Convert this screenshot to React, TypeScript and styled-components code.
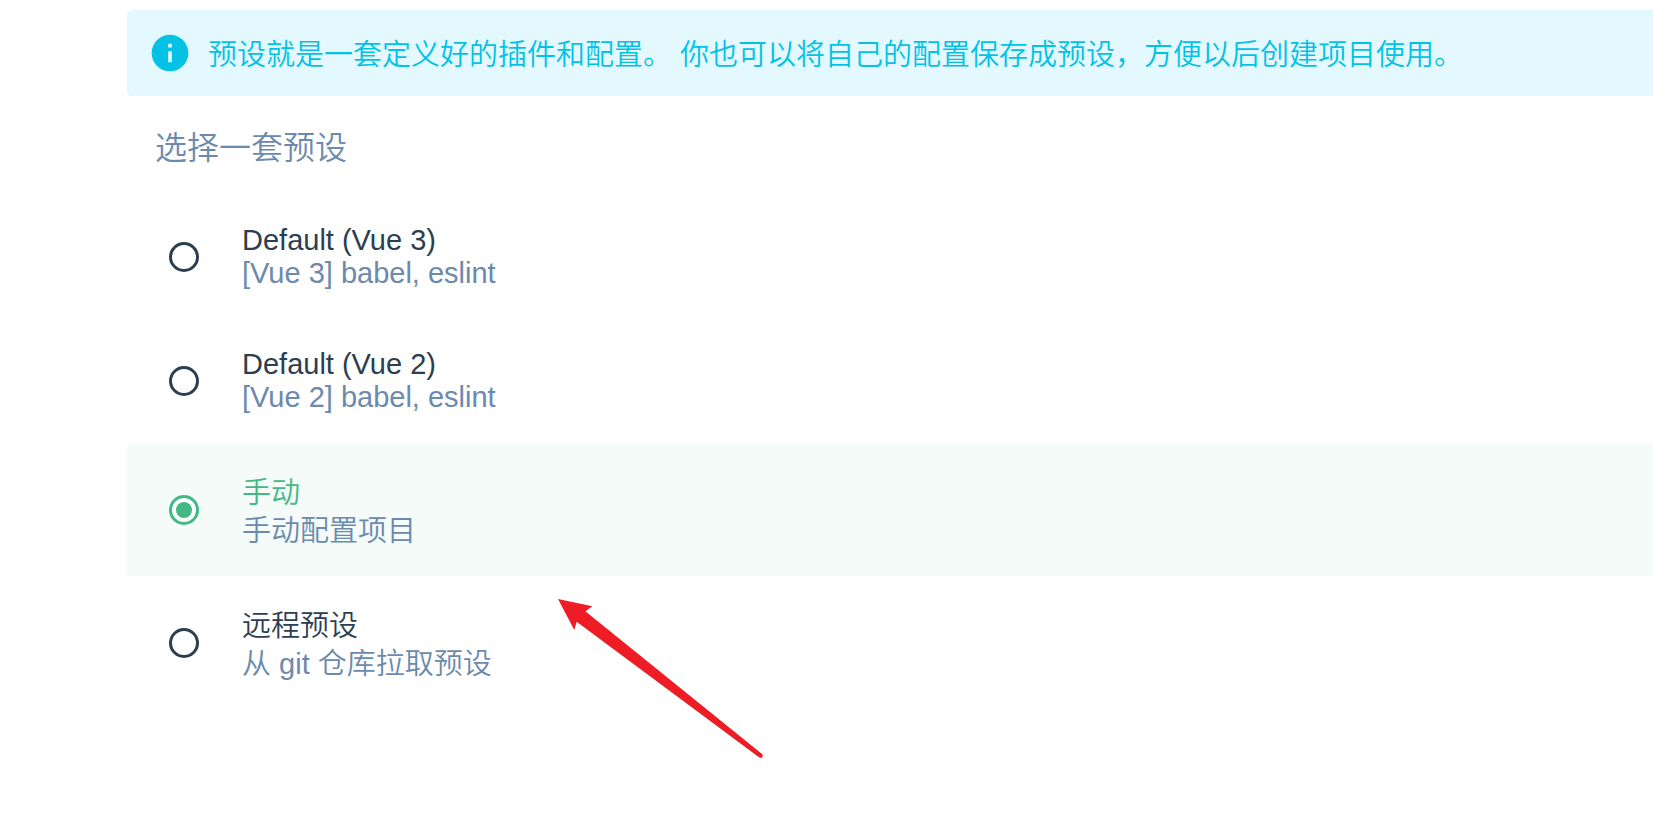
import React, { useState } from "react";
import styled, { createGlobalStyle } from "styled-components";

const color = {
  info: "#03c2e6",
  infoLight: "#e3f9ff",
  dark: "#2c3e50",
  muted: "#6b8aad",
  primary: "#42b983",
  primaryLight: "#f4fbf9",
  arrow: "#ee1c25",
};

const GlobalStyle = createGlobalStyle`
  *, *::before, *::after { box-sizing: border-box; }
  body {
    margin: 0;
    background: #ffffff;
    color: ${color.dark};
    font-family: "Liberation Sans", "Noto Sans CJK SC", sans-serif;
    font-size: 29px;
    font-weight: 350;
  }
`;

const Page = styled.main`
  position: relative;
  padding: 10px 0 80px 127px;
`;

const Banner = styled.p`
  display: flex;
  align-items: center;
  gap: 16px;
  margin: 0;
  padding: 22px 21px;
  border-radius: 5px 0 0 5px;
  background: ${color.infoLight};
  color: ${color.info};
  line-height: 38px;
`;

const BannerText = styled.span`
  padding-top: 4px;
`;

const InfoIcon = styled.svg`
  flex: none;
  width: 44px;
  height: 44px;
  margin: -2px 0;
  fill: currentColor;
`;

const Presets = styled.fieldset`
  margin: 0;
  padding: 0;
  border: 0;
  min-width: 0;
`;

const Title = styled.legend`
  padding: 32px 28px 26px;
  color: ${color.muted};
  font-size: 32px;
  line-height: 41px;
`;

const Option = styled.label<{ $selected: boolean; $tall: boolean }>`
  display: flex;
  align-items: center;
  gap: 43px;
  padding: ${(p) => (p.$tall ? 26 : 29)}px 42px;
  cursor: pointer;
  color: ${(p) => (p.$selected ? color.primary : color.dark)};
  background: ${(p) => (p.$selected ? color.primaryLight : "transparent")};
`;

const Radio = styled.input`
  appearance: none;
  display: grid;
  place-items: center;
  flex: none;
  width: 30px;
  height: 30px;
  margin: 0;
  border: 3px solid currentColor;
  border-radius: 50%;
  background: #ffffff;
  color: inherit;

  &:checked::before {
    content: "";
    width: 16px;
    height: 16px;
    border-radius: 50%;
    background: currentColor;
  }
`;

const OptionText = styled.span<{ $tall: boolean }>`
  display: flex;
  flex-direction: column;
  padding-top: ${(p) => (p.$tall ? 5 : 0)}px;
  line-height: ${(p) => (p.$tall ? 38 : 33)}px;
`;

const Description = styled.span`
  color: ${color.muted};
`;

const Arrow = styled.svg`
  position: absolute;
  left: 540px;
  top: 580px;
  width: 240px;
  height: 190px;
  fill: ${color.arrow};
  pointer-events: none;
`;

const presets = [
  { id: "vue3", name: "Default (Vue 3)", description: "[Vue 3] babel, eslint", tall: false },
  { id: "vue2", name: "Default (Vue 2)", description: "[Vue 2] babel, eslint", tall: false },
  { id: "manual", name: "手动", description: "手动配置项目", tall: true },
  { id: "remote", name: "远程预设", description: "从 git 仓库拉取预设", tall: true },
];

export default function App() {
  const [selected, setSelected] = useState("manual");

  return (
    <>
      <GlobalStyle />
      <Page lang="zh-CN">
        <Banner>
          <InfoIcon viewBox="0 0 24 24" aria-hidden="true">
            <path d="M12 2C6.48 2 2 6.48 2 12s4.48 10 10 10 10-4.48 10-10S17.52 2 12 2zm1 15h-2v-6h2v6zm0-8h-2V7h2v2z" />
          </InfoIcon>
          <BannerText>
            预设就是一套定义好的插件和配置。 你也可以将自己的配置保存成预设，方便以后创建项目使用。
          </BannerText>
        </Banner>
        <Presets>
          <Title>选择一套预设</Title>
          {presets.map((preset) => (
            <Option key={preset.id} $selected={selected === preset.id} $tall={preset.tall}>
              <Radio
                type="radio"
                name="preset"
                value={preset.id}
                checked={selected === preset.id}
                onChange={() => setSelected(preset.id)}
              />
              <OptionText $tall={preset.tall}>
                <span>{preset.name}</span>
                <Description>{preset.description}</Description>
              </OptionText>
            </Option>
          ))}
        </Presets>
        <Arrow viewBox="0 0 720 570" aria-hidden="true">
          <path d="M54 57 157 79 136 94 667 523Q671 530 663 534L657 532 110 125 103 150Z" />
        </Arrow>
      </Page>
    </>
  );
}
